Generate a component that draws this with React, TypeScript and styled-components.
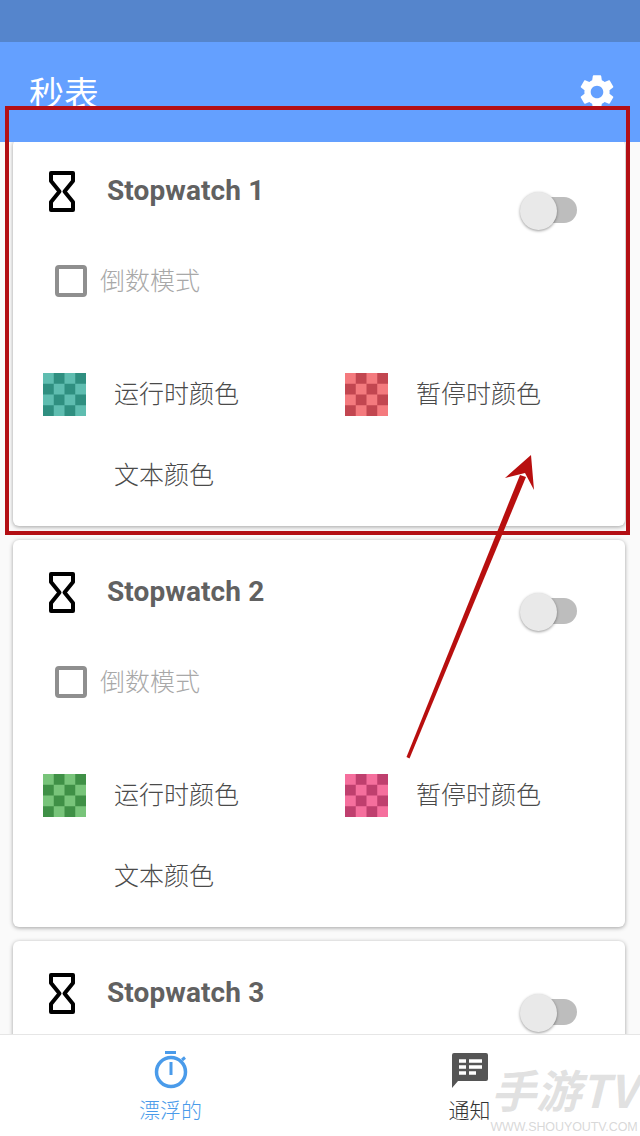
import React from "react";
import styled, { createGlobalStyle } from "styled-components";

const CJK = `"Noto Sans CJK SC", "Noto Sans", sans-serif`;

const GlobalStyle = createGlobalStyle`
  html, body {
    margin: 0;
    padding: 0;
    background: #fafafa;
  }
`;

const Screen = styled.div`
  position: relative;
  width: 640px;
  height: 1136px;
  display: flex;
  flex-direction: column;
  overflow: hidden;
  background: #fafafa;
  font-family: ${CJK};
`;

const StatusBar = styled.div`
  height: 42px;
  flex: none;
  background: #5585cc;
`;

const AppBar = styled.header`
  position: relative;
  z-index: 2;
  height: 100px;
  flex: none;
  box-sizing: border-box;
  padding: 26px 22px 0 29px;
  display: flex;
  justify-content: space-between;
  align-items: flex-start;
  background: #64a0ff;
`;

const Title = styled.h1`
  margin: 0;
  font-size: 35px;
  line-height: 48px;
  font-weight: 400;
  color: #fff;
`;

const GearIcon = styled.svg`
  width: 42px;
  height: 42px;
  margin-top: 3px;
  fill: #fff;
`;

const List = styled.main`
  flex: 1;
  min-height: 0;
  margin-top: -3px;
  padding: 0 15px 0 13px;
  display: flex;
  flex-direction: column;
  gap: 14px;
  overflow: hidden;
`;

const Card = styled.section`
  flex: none;
  height: 387px;
  box-sizing: border-box;
  padding-top: 32px;
  background: #fff;
  border-radius: 6px;
  box-shadow: 0 1px 4px rgba(0, 0, 0, 0.36);
`;

const CardHead = styled.div`
  height: 78px;
  padding: 0 48px 0 36px;
  display: flex;
  align-items: flex-start;
`;

const Hourglass = styled.svg`
  width: 26px;
  height: 41px;
  flex: none;
  fill: none;
  stroke: #000;
  stroke-width: 4;
  stroke-linejoin: round;
`;

const CardName = styled.h2`
  margin: 0 0 0 32px;
  font-family: Roboto, sans-serif;
  font-size: 28px;
  line-height: 40px;
  font-weight: 700;
  letter-spacing: 0.1px;
  color: #616161;
`;

const Switch = styled.div`
  position: relative;
  width: 57px;
  height: 38px;
  margin: 21px 0 0 auto;
`;

const SwitchTrack = styled.div`
  position: absolute;
  top: 5px;
  right: 0;
  width: 46px;
  height: 26px;
  border-radius: 13px;
  background: #bdbdbd;
`;

const SwitchThumb = styled.div`
  position: absolute;
  top: 0;
  left: 0;
  width: 37px;
  height: 38px;
  border-radius: 50%;
  background: #e9e9e9;
  box-shadow: 0 1px 3px rgba(0, 0, 0, 0.4);
`;

const CheckRow = styled.label`
  height: 64px;
  padding-left: 42px;
  display: flex;
  align-items: center;
  gap: 13px;
`;

const CheckBox = styled.span`
  width: 32px;
  height: 32px;
  box-sizing: border-box;
  border: 4px solid #8f8f8f;
  border-radius: 4px;
`;

const CheckLabel = styled.span`
  padding-bottom: 4px;
  font-size: 25px;
  font-weight: 300;
  color: #a8a8a8;
`;

const ColorGrid = styled.div`
  margin-top: 41px;
  padding-left: 30px;
  display: grid;
  grid-template-columns: 302px 1fr;
  grid-auto-rows: 81px;
`;

const ColorOption = styled.div`
  display: flex;
  align-items: center;
  gap: 28px;
`;

const Swatch = styled.span<{ $light: string; $dark: string }>`
  width: 43px;
  height: 43px;
  flex: none;
  background: repeating-conic-gradient(
      ${(p) => p.$dark} 0 25%,
      ${(p) => p.$light} 0 50%
    )
    0 0 / 21.5px 21.5px;
`;

const ColorLabel = styled.span<{ $indent?: boolean }>`
  margin-left: ${(p) => (p.$indent ? "71px" : "0")};
  padding-bottom: 5px;
  font-size: 25px;
  font-weight: 300;
  color: #4a4a4a;
`;

const BottomNav = styled.nav`
  position: relative;
  z-index: 2;
  height: 102px;
  flex: none;
  box-sizing: border-box;
  padding: 15px 21px 0;
  display: grid;
  grid-template-columns: 299px 299px;
  background: #fff;
  border-top: 1px solid #e6e6e6;
`;

const NavItem = styled.div<{ $active?: boolean }>`
  display: flex;
  flex-direction: column;
  align-items: center;
  font-size: 21px;
  line-height: 30px;
  font-weight: 300;
  color: ${(p) => (p.$active ? "#4a9bea" : "#333")};
`;

const NavIcon = styled.svg`
  width: 38px;
  height: 40px;
  margin-bottom: 4px;
`;

const Watermark = styled.div`
  position: absolute;
  right: 2px;
  bottom: 2px;
  z-index: 3;
  width: 148px;
  display: flex;
  flex-direction: column;
  align-items: center;
  gap: 5px;
  pointer-events: none;
`;

const WatermarkMark = styled.span`
  font-family: "Noto Sans CJK SC", "Liberation Sans", sans-serif;
  font-size: 45px;
  line-height: 52px;
  font-weight: 700;
  font-style: italic;
  white-space: nowrap;
  color: rgba(208, 208, 208, 0.65);
`;

const WatermarkUrl = styled.span`
  font-family: "Liberation Sans", sans-serif;
  font-size: 12.5px;
  line-height: 14px;
  letter-spacing: -0.1px;
  white-space: nowrap;
  color: rgba(190, 190, 190, 0.6);
`;

const Highlight = styled.div`
  position: absolute;
  left: 5px;
  top: 106px;
  width: 625px;
  height: 429px;
  z-index: 4;
  box-sizing: border-box;
  border: 4px solid #b30f14;
`;

const Arrow = styled.svg`
  position: absolute;
  left: 0;
  top: 0;
  z-index: 4;
  width: 640px;
  height: 1136px;
  pointer-events: none;
`;

const watches = [
  { name: "Stopwatch 1", run: ["#5fbdb0", "#2f8f80"], pause: ["#f47a7e", "#c24650"] },
  { name: "Stopwatch 2", run: ["#78c47a", "#3f9046"], pause: ["#f56f9d", "#bf3f6e"] },
  // the nav bar hides everything below this card's header
  { name: "Stopwatch 3" },
];

const App = () => (
  <Screen>
    <GlobalStyle />
    <StatusBar />
    <AppBar>
      <Title>秒表</Title>
      <GearIcon viewBox="0 0 24 24">
        <path d="M19.14 12.94c.04-.3.06-.61.06-.94 0-.32-.02-.64-.07-.94l2.03-1.58c.18-.14.23-.41.12-.61l-1.92-3.32c-.12-.22-.37-.29-.59-.22l-2.39.96c-.5-.38-1.03-.7-1.62-.94l-.36-2.54c-.04-.24-.24-.41-.48-.41h-3.84c-.24 0-.43.17-.47.41l-.36 2.54c-.59.24-1.13.57-1.62.94l-2.39-.96c-.22-.08-.47 0-.59.22L2.74 8.87c-.12.21-.08.47.12.61l2.03 1.58c-.05.3-.09.63-.09.94s.02.64.07.94l-2.03 1.58c-.18.14-.23.41-.12.61l1.92 3.32c.12.22.37.29.59.22l2.39-.96c.5.38 1.03.7 1.62.94l.36 2.54c.05.24.24.41.48.41h3.84c.24 0 .44-.17.47-.41l.36-2.54c.59-.24 1.13-.56 1.62-.94l2.39.96c.22.08.47 0 .59-.22l1.92-3.32c.12-.22.07-.47-.12-.61l-2.01-1.58zM12 15.6c-1.98 0-3.6-1.62-3.6-3.6s1.62-3.6 3.6-3.6 3.6 1.62 3.6 3.6-1.62 3.6-3.6 3.6z" />
      </GearIcon>
    </AppBar>

    <List>
      {watches.map((w) => (
        <Card key={w.name}>
          <CardHead>
            <Hourglass viewBox="0 0 26 41">
              <path d="M2 2H24V10L15.5 20.5L24 31V39H2V31L10.5 20.5L2 10Z" />
            </Hourglass>
            <CardName>{w.name}</CardName>
            <Switch>
              <SwitchTrack />
              <SwitchThumb />
            </Switch>
          </CardHead>
          {w.run && w.pause && (
            <>
              <CheckRow>
                <CheckBox />
                <CheckLabel>倒数模式</CheckLabel>
              </CheckRow>
              <ColorGrid>
                <ColorOption>
                  <Swatch $light={w.run[0]} $dark={w.run[1]} />
                  <ColorLabel>运行时颜色</ColorLabel>
                </ColorOption>
                <ColorOption>
                  <Swatch $light={w.pause[0]} $dark={w.pause[1]} />
                  <ColorLabel>暂停时颜色</ColorLabel>
                </ColorOption>
                <ColorOption>
                  <ColorLabel $indent>文本颜色</ColorLabel>
                </ColorOption>
              </ColorGrid>
            </>
          )}
        </Card>
      ))}
    </List>

    <BottomNav>
      <NavItem $active>
        <NavIcon viewBox="0 0 38 40" fill="none" stroke="#4a9bea">
          <path d="M13 2.5H24" strokeWidth="3" />
          <circle cx="19" cy="22" r="14.5" strokeWidth="3.5" />
          <path d="M19 12V25" strokeWidth="3" />
          <path d="M30 10L33 7.5" strokeWidth="3" />
        </NavIcon>
        漂浮的
      </NavItem>
      <NavItem>
        <NavIcon viewBox="0 0 38 40">
          <path d="M3 3H35Q37 3 37 5V29Q37 31 35 31H7L1 38V5Q1 3 3 3Z" fill="#555" />
          <path d="M8 11H15M18 11H31M8 17H15M18 17H31M8 23H15M18 23H25" stroke="#fff" strokeWidth="3.5" />
        </NavIcon>
        通知
      </NavItem>
    </BottomNav>

    <Watermark>
      <WatermarkMark>手游TV</WatermarkMark>
      <WatermarkUrl>WWW.SHOUYOUTV.COM</WatermarkUrl>
    </Watermark>

    <Highlight />
    <Arrow viewBox="0 0 640 1136">
      <path d="M406.5 757L409.5 758.5L526 477L520 475Z" fill="#b80f0f" />
      <path d="M531 455L534 490L525 473L505 478Z" fill="#b80f0f" />
    </Arrow>
  </Screen>
);

export default App;
